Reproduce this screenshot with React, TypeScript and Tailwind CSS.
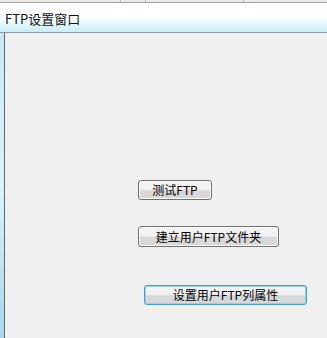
const cjk = "font-['SimSun','Noto_Sans_CJK_SC',sans-serif]";

function WinButton({ label, focused, className }: { label: string; focused?: boolean; className: string }) {
  return (
    <button
      type="button"
      className={
        (focused
          ? "border-[#3c9fd8] shadow-[inset_0_0_0_1px_#8fd2f4] "
          : "border-[#707070] shadow-[inset_0_0_0_1px_#fcfcfc] ") +
        "flex items-center justify-center rounded-[3px] border bg-gradient-to-b from-[#f2f2f2] from-45% to-[#d8d8d8] to-55% text-[12px] leading-none text-black " +
        cjk +
        " " +
        className
      }
    >
      {label}
    </button>
  );
}

export default function App() {
  return (
    <div className="flex h-[338px] w-[327px] flex-col overflow-hidden bg-[#f0f0f0]">
      <div className="flex h-[3px] border-b border-[#9aa4ad] bg-[#eceae4]">
        <div className="w-[120px]" />
        <div className="w-[25px] border-l border-[#b8bcc0]" />
        <div className="w-[98px] border-l border-[#b8bcc0]" />
        <div className="flex-1 border-l border-[#b8bcc0]" />
      </div>
      <div className="flex h-[29px] items-center bg-gradient-to-b from-white from-45% to-[#c6eefa] pl-[5px] pt-[2px]">
        <span className={"text-[13px] text-[#111] " + cjk}>FTP设置窗口</span>
      </div>
      <div className="h-px bg-[#8d9aa6]" />
      <div className="flex flex-1">
        <div className="w-[4px] bg-gradient-to-b from-[#c9e9f4] via-[#d8f4fc] to-[#a9d7ea]" />
        <div className="w-px bg-[#5f6670]" />
        <div className="flex flex-1 flex-col items-start bg-[#f0f0f0]">
          <WinButton label="测试FTP" className="ml-[133px] mt-[147px] h-[20px] w-[74px]" />
          <WinButton label="建立用户FTP文件夹" className="ml-[133px] mt-[26px] h-[21px] w-[141px]" />
          <WinButton label="设置用户FTP列属性" focused className="ml-[139px] mt-[38px] h-[20px] w-[163px]" />
        </div>
      </div>
    </div>
  );
}
